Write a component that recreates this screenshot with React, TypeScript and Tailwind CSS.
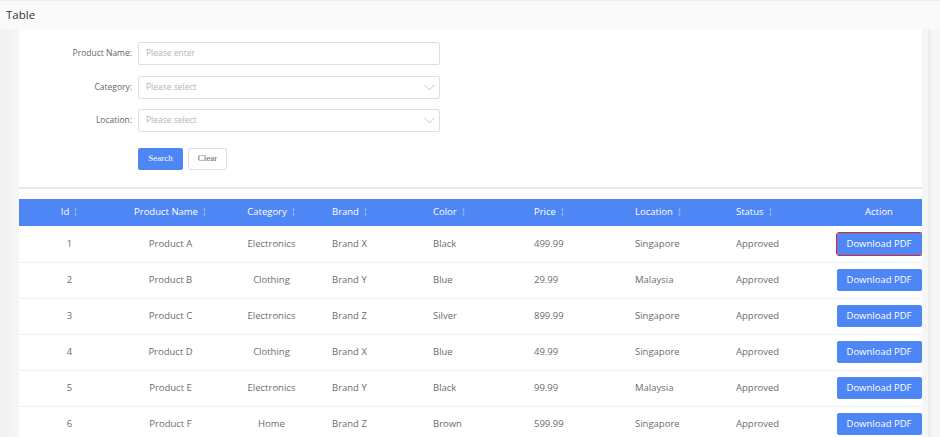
import React from 'react';

type Row = {
  id: number;
  name: string;
  category: string;
  brand: string;
  color: string;
  price: string;
  location: string;
  status: string;
};

const rows: Row[] = [
  { id: 1, name: 'Product A', category: 'Electronics', brand: 'Brand X', color: 'Black', price: '499.99', location: 'Singapore', status: 'Approved' },
  { id: 2, name: 'Product B', category: 'Clothing', brand: 'Brand Y', color: 'Blue', price: '29.99', location: 'Malaysia', status: 'Approved' },
  { id: 3, name: 'Product C', category: 'Electronics', brand: 'Brand Z', color: 'Silver', price: '899.99', location: 'Singapore', status: 'Approved' },
  { id: 4, name: 'Product D', category: 'Clothing', brand: 'Brand X', color: 'Blue', price: '49.99', location: 'Singapore', status: 'Approved' },
  { id: 5, name: 'Product E', category: 'Electronics', brand: 'Brand Y', color: 'Black', price: '99.99', location: 'Malaysia', status: 'Approved' },
  { id: 6, name: 'Product F', category: 'Home', brand: 'Brand Z', color: 'Brown', price: '599.99', location: 'Singapore', status: 'Approved' },
];

const SortIcon = () => (
  <svg width="5" height="8" viewBox="0 0 5 8" className="ml-[4px] inline-block align-[-1px]">
    <path d="M2.5 0.5 V7.5 M1.2 1.8 L2.5 0.5 L3.8 1.8 M1.2 6.2 L2.5 7.5 L3.8 6.2" stroke="#9dbbf2" strokeWidth="0.7" fill="none" />
  </svg>
);

const Chevron = () => (
  <svg width="11" height="7" viewBox="0 0 11 7" className="shrink-0">
    <path d="M0.5 0.8 L5.5 5.8 L10.5 0.8" stroke="#c4c4c4" strokeWidth="1" fill="none" />
  </svg>
);

const FormRow: React.FC<{ label: string; placeholder: string; select?: boolean; className?: string }> = ({ label, placeholder, select, className }) => (
  <div className={`flex items-center h-[23px] ${className ?? ''}`}>
    <label className="w-[119px] pr-[6px] text-right text-[8.5px] text-[#666]">{label}</label>
    <div className="w-[302px] h-[23px] border border-[#dcdfe6] rounded-[2px] bg-white flex items-center justify-between pl-[7px] pr-[4px]">
      <span className="text-[8.5px] text-[#b4b4b4]">{placeholder}</span>
      {select && <Chevron />}
    </div>
  </div>
);

export default function App() {
  const headers: { label: string; align: 'center' | 'left'; sort: boolean }[] = [
    { label: 'Id', align: 'center', sort: true },
    { label: 'Product Name', align: 'center', sort: true },
    { label: 'Category', align: 'center', sort: true },
    { label: 'Brand', align: 'left', sort: true },
    { label: 'Color', align: 'left', sort: true },
    { label: 'Price', align: 'left', sort: true },
    { label: 'Location', align: 'left', sort: true },
    { label: 'Status', align: 'left', sort: true },
    { label: 'Action', align: 'center', sort: false },
  ];

  return (
    <div className="min-h-screen bg-[#f6f6f6] font-['Open_Sans',sans-serif] overflow-hidden">
      <div className="h-[29px] bg-[#fafafa] border-t border-[#eeeeee] flex items-center px-[6px] text-[11.5px] text-[#333]">
        Table
      </div>
      <div className="flex">
        <div className="w-[19px] shrink-0 bg-gradient-to-r from-[#f1f1f1] to-[#f6f6f6]" />
        <div className="w-[903px] shrink-0 bg-white">
          {/* search form */}
          <div className="pt-[13px] pb-[17px]">
            <FormRow label="Product Name:" placeholder="Please enter" className="mb-[11px]" />
            <FormRow label="Category:" placeholder="Please select" select className="mb-[10px]" />
            <FormRow label="Location:" placeholder="Please select" select />
            <div className="flex gap-[5px] pl-[119px] mt-[16px]">
              <button className="w-[45px] h-[22px] rounded-[2px] bg-[#4e86f5] text-white text-[9px] font-['Liberation_Serif',serif]">
                Search
              </button>
              <button className="w-[39px] h-[22px] rounded-[2px] border border-[#dcdfe6] bg-white text-[#606266] text-[9px] font-['Liberation_Serif',serif]">
                Clear
              </button>
            </div>
          </div>
          <div className="h-[2px] bg-[#e9e9e9]" />
          <div className="h-[10px] bg-white" />

          {/* table */}
          <div className="overflow-hidden">
            <table className="table-fixed w-[912px] border-collapse text-[9.5px]">
              <colgroup>
                {headers.map((h, i) => (
                  <col key={h.label} className={i === 8 ? 'w-[104px]' : 'w-[101px]'} />
                ))}
              </colgroup>
              <thead>
                <tr className="h-[27px] bg-[#4e86f5]">
                  {headers.map(h => (
                    <th
                      key={h.label}
                      className={`font-normal text-white text-[9.5px] ${h.align === 'left' ? 'text-left pl-[10px]' : 'text-center'}`}
                    >
                      {h.label}
                      {h.sort && <SortIcon />}
                    </th>
                  ))}
                </tr>
              </thead>
              <tbody className="text-[#6a6d71]">
                {rows.map((r, i) => (
                  <tr key={r.id} className="h-[36px] border-b border-[#ebeef5]">
                    <td className="text-center">{r.id}</td>
                    <td className="text-center">{r.name}</td>
                    <td className="text-center">{r.category}</td>
                    <td className="pl-[10px]">{r.brand}</td>
                    <td className="pl-[10px]">{r.color}</td>
                    <td className="pl-[10px]">{r.price}</td>
                    <td className="pl-[10px]">{r.location}</td>
                    <td className="pl-[10px]">{r.status}</td>
                    <td className="text-center">
                      <button
                        className={`w-[85px] h-[22px] rounded-[2px] bg-[#4e86f5] text-white text-[9.5px] ${
                          i === 0 ? 'outline outline-1 outline-[#e0242b]' : ''
                        }`}
                      >
                        Download PDF
                      </button>
                    </td>
                  </tr>
                ))}
              </tbody>
            </table>
          </div>
        </div>
        <div className="flex-1 flex justify-center bg-[#f6f6f6]">
          <div className="w-[3px] bg-[#ececec] ml-[-4px]" />
        </div>
      </div>
    </div>
  );
}
